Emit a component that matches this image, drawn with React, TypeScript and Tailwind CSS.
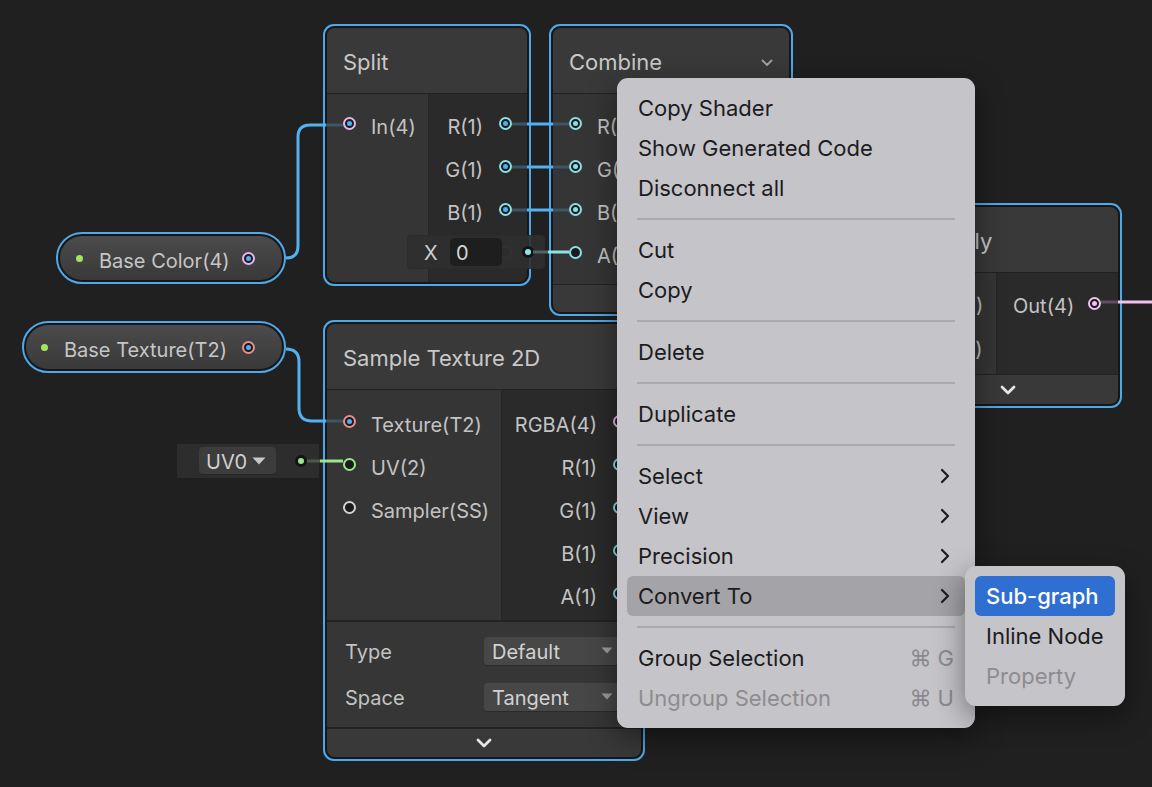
import React from "react";

type PortKind =
  | "pinkBlue"
  | "cyanBlue"
  | "cyanCyan"
  | "cyanEmpty"
  | "salmonBlue"
  | "greenEmpty"
  | "whiteEmpty"
  | "pinkPink"
  | "faint";

const ringCls: Record<PortKind, string> = {
  pinkBlue: "border-[#e7b6ea]",
  cyanBlue: "border-[#8be0e4]",
  cyanCyan: "border-[#8be0e4]",
  cyanEmpty: "border-[#8be0e4]",
  salmonBlue: "border-[#ee8c86]",
  greenEmpty: "border-[#9de58c]",
  whiteEmpty: "border-[#d2d2d2]",
  pinkPink: "border-[#f0c2f0]",
  faint: "border-[#4a4a4a]",
};

const dotCls: Record<PortKind, string> = {
  pinkBlue: "bg-[#4cb0f2]",
  cyanBlue: "bg-[#4cb0f2]",
  cyanCyan: "bg-[#8be0e4]",
  cyanEmpty: "",
  salmonBlue: "bg-[#4cb0f2]",
  greenEmpty: "",
  whiteEmpty: "",
  pinkPink: "bg-[#f0c2f0]",
  faint: "",
};

function Port({ kind }: { kind: PortKind }) {
  const dot = dotCls[kind];
  return (
    <span
      className={`flex h-[13px] w-[13px] shrink-0 items-center justify-center rounded-full border-2 bg-[#1b1b1b] ${ringCls[kind]}`}
    >
      {dot ? <span className={`h-[5px] w-[5px] rounded-full ${dot}`} /> : null}
    </span>
  );
}

function InRow({ kind, label, h = "h-[43px]" }: { kind: PortKind; label: string; h?: string }) {
  return (
    <div className={`flex ${h} items-center gap-[15px] pl-[16px]`}>
      <Port kind={kind} />
      <span className="translate-y-[3px] whitespace-nowrap">{label}</span>
    </div>
  );
}

function OutRow({
  kind,
  label,
  h = "h-[43px]",
  pr = "pr-[15px]",
}: {
  kind: PortKind;
  label: string;
  h?: string;
  pr?: string;
}) {
  return (
    <div className={`flex ${h} items-center justify-end gap-[16px] ${pr}`}>
      <span className="translate-y-[3px] whitespace-nowrap">{label}</span>
      <Port kind={kind} />
    </div>
  );
}

function Frame({ pos, children }: { pos: string; children: React.ReactNode }) {
  return (
    <div className={`absolute rounded-[11px] border-2 border-[#4ea9ea] bg-[#171717] p-[2px] ${pos}`}>
      <div className="flex h-full w-full flex-col overflow-hidden rounded-[8px] bg-[#2a2a2a] text-[20px] text-[#c3c3c3]">
        {children}
      </div>
    </div>
  );
}

function Header({ title, chevron, pl = "pl-[16px]" }: { title: string; chevron?: boolean; pl?: string }) {
  return (
    <div
      className={`flex h-[66px] shrink-0 items-center justify-between border-b border-[#222222] bg-[#393939] ${pl} pr-[16px] text-[22px] text-[#c8c8c8]`}
    >
      <span className="translate-y-[2px] whitespace-nowrap">{title}</span>
      {chevron ? (
        <svg width="12" height="8" viewBox="0 0 12 8" className="translate-y-[2px]">
          <path d="M1.5 1.5 L6 6 L10.5 1.5" fill="none" stroke="#a2a2a2" strokeWidth="1.8" strokeLinecap="round" strokeLinejoin="round" />
        </svg>
      ) : null}
    </div>
  );
}

function FooterChevron() {
  return (
    <svg width="16" height="10" viewBox="0 0 16 10">
      <path d="M2 2 L8 8 L14 2" fill="none" stroke="#e6e6e6" strokeWidth="2.8" strokeLinecap="round" strokeLinejoin="round" />
    </svg>
  );
}

function DownTri({ color, w = 12, h = 7 }: { color: string; w?: number; h?: number }) {
  return (
    <svg width={w} height={h} viewBox={`0 0 ${w} ${h}`}>
      <path d={`M0.5 0.5 L${w - 0.5} 0.5 L${w / 2} ${h - 0.5} Z`} fill={color} />
    </svg>
  );
}

function MenuChevron() {
  return (
    <svg width="10" height="16" viewBox="0 0 10 16" className="mr-[4px]">
      <path d="M2 2 L8 8 L2 14" fill="none" stroke="#1d1d1f" strokeWidth="2.2" strokeLinecap="round" strokeLinejoin="round" />
    </svg>
  );
}

function MenuItem({
  label,
  chevron,
  shortcut,
  disabled,
  active,
}: {
  label: string;
  chevron?: boolean;
  shortcut?: string;
  disabled?: boolean;
  active?: boolean;
}) {
  return (
    <div
      className={`mx-[10px] flex h-[40px] items-center justify-between rounded-[6px] px-[11px] ${
        active ? "bg-[#a4a3a7]" : ""
      }`}
    >
      <span className={`whitespace-nowrap ${disabled ? "text-[#8d8c90]" : "text-[#1c1c1e]"}`}>{label}</span>
      {chevron ? <MenuChevron /> : null}
      {shortcut ? (
        <span className="whitespace-nowrap font-['Inter','DejaVu_Sans',sans-serif] text-[#8b8a8e]">{shortcut}</span>
      ) : null}
    </div>
  );
}

function Sep() {
  return <div className="mx-[20px] my-[10px] h-[2px] bg-[#aaa9ad]" />;
}

export default function App() {
  return (
    <div className="relative h-[787px] w-[1152px] overflow-hidden bg-[#202020] font-['Inter','Noto_Sans',sans-serif]">
      {/* Split node */}
      <Frame pos="left-[323px] top-[24px] h-[262px] w-[208px]">
        <Header title="Split" />
        <div className="flex flex-1">
          <div className="w-[102px] border-r border-[#262626] bg-[#353535] pt-[8px]">
            <InRow kind="pinkBlue" label="In(4)" />
          </div>
          <div className="flex-1 pt-[8px]">
            <OutRow kind="cyanBlue" label="R(1)" />
            <OutRow kind="cyanBlue" label="G(1)" />
            <OutRow kind="cyanBlue" label="B(1)" />
            <div className="flex h-[43px] items-center justify-end pr-[15px]">
              <Port kind="faint" />
            </div>
          </div>
        </div>
      </Frame>

      {/* Combine node */}
      <Frame pos="left-[549px] top-[24px] h-[292px] w-[244px]">
        <Header title="Combine" chevron />
        <div className="flex flex-1">
          <div className="w-[150px] bg-[#353535] pt-[8px]">
            <InRow kind="cyanCyan" label="R(1)" />
            <InRow kind="cyanCyan" label="G(1)" />
            <InRow kind="cyanCyan" label="B(1)" />
            <InRow kind="cyanEmpty" label="A(1)" />
          </div>
          <div className="flex-1" />
        </div>
        <div className="h-[28px] shrink-0 border-t border-[#222222] bg-[#393939]" />
      </Frame>

      {/* Multiply node */}
      <Frame pos="left-[894px] top-[203px] h-[205px] w-[228px]">
        <Header title="Multiply" pl="pl-[12px]" />
        <div className="flex flex-1">
          <div className="w-[99px] border-r border-[#262626] bg-[#353535] pt-[8px]">
            <InRow kind="pinkBlue" label="A(4)" h="h-[44px]" />
            <InRow kind="pinkBlue" label="B(4)" h="h-[44px]" />
          </div>
          <div className="flex-1 pt-[8px]">
            <div className="flex h-[44px] items-center justify-between pl-[16px] pr-[17px]">
              <span className="translate-y-[3px]">Out(4)</span>
              <Port kind="pinkPink" />
            </div>
          </div>
        </div>
        <div className="flex h-[30px] shrink-0 items-center justify-center border-t border-[#222222] bg-[#393939]">
          <FooterChevron />
        </div>
      </Frame>

      {/* Sample Texture 2D node */}
      <Frame pos="left-[323px] top-[320px] h-[441px] w-[322px]">
        <Header title="Sample Texture 2D" />
        <div className="flex h-[230px] shrink-0">
          <div className="w-[175px] border-r border-[#262626] bg-[#353535] pt-[10px]">
            <InRow kind="salmonBlue" label="Texture(T2)" />
            <InRow kind="greenEmpty" label="UV(2)" />
            <InRow kind="whiteEmpty" label="Sampler(SS)" />
          </div>
          <div className="flex-1 pt-[10px]">
            <OutRow kind="pinkBlue" label="RGBA(4)" />
            <OutRow kind="cyanEmpty" label="R(1)" />
            <OutRow kind="cyanEmpty" label="G(1)" />
            <OutRow kind="cyanEmpty" label="B(1)" />
            <OutRow kind="cyanEmpty" label="A(1)" />
          </div>
        </div>
        <div className="flex-1 border-t-2 border-[#222222] bg-[#363636] pt-[6px]">
          {[
            ["Type", "Default"],
            ["Space", "Tangent"],
          ].map(([k, v]) => (
            <div key={k} className="flex h-[46px] items-center pl-[18px] pr-[16px]">
              <span className="w-[139px] translate-y-[1px]">{k}</span>
              <div className="flex h-[29px] flex-1 items-center justify-between rounded-[4px] border-b border-[#2a2a2a] bg-[#474747] pl-[8px] pr-[12px] text-[#d2d2d2]">
                <span className="translate-y-[1px]">{v}</span>
                <DownTri color="#9c9c9c" />
              </div>
            </div>
          ))}
        </div>
        <div className="flex h-[30px] shrink-0 items-center justify-center border-t-2 border-[#222222] bg-[#393939]">
          <FooterChevron />
        </div>
      </Frame>

      {/* Base Color property */}
      <div className="absolute left-[56px] top-[232px] h-[52px] w-[230px] rounded-full border-2 border-[#4ea9ea] bg-[#171717] p-[2px]">
        <div className="flex h-full items-center rounded-full bg-gradient-to-b from-[#4b4b4b] to-[#393939] pl-[16px] pr-[27px] text-[20px] text-[#c6c6c6]">
          <span className="h-[7px] w-[7px] shrink-0 rounded-full bg-[#a6e35e]" />
          <span className="ml-[16px] translate-y-[3px] whitespace-nowrap">Base Color(4)</span>
          <span className="ml-auto">
            <Port kind="pinkBlue" />
          </span>
        </div>
      </div>

      {/* Base Texture property */}
      <div className="absolute left-[22px] top-[321px] h-[52px] w-[264px] rounded-full border-2 border-[#4ea9ea] bg-[#171717] p-[2px]">
        <div className="flex h-full items-center rounded-full bg-gradient-to-b from-[#4b4b4b] to-[#393939] pl-[15px] pr-[27px] text-[20px] text-[#c6c6c6]">
          <span className="h-[7px] w-[7px] shrink-0 rounded-full bg-[#a6e35e]" />
          <span className="ml-[16px] translate-y-[3px] whitespace-nowrap">Base Texture(T2)</span>
          <span className="ml-auto">
            <Port kind="salmonBlue" />
          </span>
        </div>
      </div>

      {/* UV0 inline node */}
      <div className="absolute left-[177px] top-[444px] flex h-[34px] w-[142px] items-center bg-[#2d2d2d] pl-[22px] text-[20px] text-[#d0d0d0]">
        <div className="flex h-[28px] w-[77px] items-center justify-between rounded-[4px] border-b border-[#252525] bg-[#3c3c3c] pl-[7px] pr-[10px]">
          <span className="translate-y-[1px]">UV0</span>
          <DownTri color="#c8c8c8" w={14} h={8} />
        </div>
        <span className="ml-[19px] flex h-[12px] w-[12px] items-center justify-center rounded-full bg-[#141414]">
          <span className="h-[6px] w-[6px] rounded-full bg-[#9de58c]" />
        </span>
      </div>

      {/* X inline value */}
      <div className="absolute left-[407px] top-[235px] flex h-[34px] w-[138px] items-center rounded-[4px] border border-[#2b2b2b] bg-[#2f2f2f]/90 pl-[16px] text-[20px] text-[#cfcfcf]">
        <span className="w-[26px] translate-y-[1px]">X</span>
        <div className="flex h-[28px] w-[52px] items-center rounded-[5px] bg-[#1e1e1e] pl-[6px] text-[#d6d6d6]">
          <span className="translate-y-[1px]">0</span>
        </div>
        <span className="ml-[20px] flex h-[12px] w-[12px] items-center justify-center rounded-full bg-[#141414]">
          <span className="h-[6px] w-[6px] rounded-full bg-[#8fe3e6]" />
        </span>
      </div>

      {/* Wires */}
      <svg className="pointer-events-none absolute left-0 top-0" width="1152" height="787" viewBox="0 0 1152 787">
        <g fill="none" strokeWidth="3" strokeLinecap="butt">
          <path d="M286 258 Q298 258 298 246 L298 137 Q298 125 310 125 L326 125" stroke="#52b1f0" />
          <path d="M326 125 L343 125" stroke="#3d5667" />
          <path d="M286 349 Q299 349 299 362 L299 408 Q299 421 312 421 L326 421" stroke="#52b1f0" />
          <path d="M326 421 L343 421" stroke="#3d5667" />
          {[124, 167, 210].map((y) => (
            <g key={y}>
              <path d={`M512 ${y} L527 ${y}`} stroke="#3d5667" />
              <path d={`M527 ${y} L553 ${y}`} stroke="#52b1f0" />
              <path d={`M553 ${y} L569 ${y}`} stroke="#3d5667" />
            </g>
          ))}
          <path d="M533 252 L548 252" stroke="#4f6567" />
          <path d="M548 252 L569 252" stroke="#8fe3e6" />
          <path d="M307 461 L320 461" stroke="#4a5c47" />
          <path d="M320 461 L343 461" stroke="#9de58c" />
          <path d="M1101 302 L1118 302" stroke="#5e4e5e" />
          <path d="M1118 302 L1152 302" stroke="#f0c2f0" />
        </g>
      </svg>

      {/* Context menu */}
      <div className="absolute left-[617px] top-[78px] w-[358px] rounded-[11px] bg-[#c5c4c8] py-[10px] text-[22px] shadow-[0_10px_30px_rgba(0,0,0,0.45)]">
        <MenuItem label="Copy Shader" />
        <MenuItem label="Show Generated Code" />
        <MenuItem label="Disconnect all" />
        <Sep />
        <MenuItem label="Cut" />
        <MenuItem label="Copy" />
        <Sep />
        <MenuItem label="Delete" />
        <Sep />
        <MenuItem label="Duplicate" />
        <Sep />
        <MenuItem label="Select" chevron />
        <MenuItem label="View" chevron />
        <MenuItem label="Precision" chevron />
        <MenuItem label="Convert To" chevron active />
        <Sep />
        <MenuItem label="Group Selection" shortcut="⌘ G" />
        <MenuItem label="Ungroup Selection" shortcut="⌘ U" disabled />
      </div>

      {/* Submenu */}
      <div className="absolute left-[965px] top-[566px] w-[160px] rounded-[11px] bg-[#c5c4c8] py-[10px] text-[22px] shadow-[0_10px_30px_rgba(0,0,0,0.45)]">
        <div className="mx-[10px] flex h-[40px] items-center rounded-[6px] bg-[#2f6fd2] px-[11px] font-medium text-white">
          Sub-graph
        </div>
        <div className="mx-[10px] flex h-[40px] items-center px-[11px] text-[#1c1c1e]">Inline Node</div>
        <div className="mx-[10px] flex h-[40px] items-center px-[11px] text-[#8d8c90]">Property</div>
      </div>
    </div>
  );
}
